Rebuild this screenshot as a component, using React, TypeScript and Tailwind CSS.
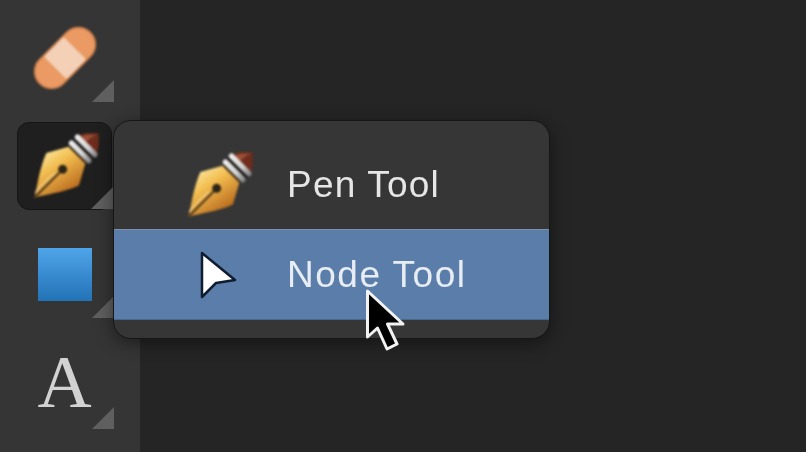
import type { ReactNode } from "react";

function PenIcon({ className = "" }: { className?: string }) {
  return (
    <svg viewBox="0 0 70 68" width={70} height={68} className={`shrink-0 blur-[0.8px] ${className}`}>
      <defs>
        <linearGradient id="nib" x1="0" y1="0" x2="1" y2="0.25">
          <stop offset="0" stopColor="#fbe8a0" />
          <stop offset="0.4" stopColor="#f2bd50" />
          <stop offset="1" stopColor="#bd6f20" />
        </linearGradient>
        <linearGradient id="ring" x1="0" y1="0" x2="1" y2="0">
          <stop offset="0" stopColor="#f2f2f2" />
          <stop offset="0.6" stopColor="#d4d4d4" />
          <stop offset="1" stopColor="#7a7a7a" />
        </linearGradient>
      </defs>
      <g transform="translate(65 2) rotate(45)">
        <path d="M-14 16 L-9 8 L0 -1 L9 8 L14 16 Z" fill="#6e2c1c" strokeLinejoin="round" />
        <path d="M-3 16 L-2 6 L0 1 L-8 9 L-11 16 Z" fill="#9a4f36" />
        <rect x="-15" y="14" width="30" height="5.5" rx="2.5" fill="url(#ring)" />
        <rect x="-14" y="19.5" width="28" height="3" fill="#1f1c1a" />
        <rect x="-15" y="22.5" width="30" height="5.5" rx="2.5" fill="url(#ring)" />
        <rect x="-12" y="28" width="24" height="2" fill="#3a2a18" />
        <path d="M-12 30 L12 30 L23 50 C17 66 7 78 0 90 C-7 78 -17 66 -23 50 Z" fill="url(#nib)" />
        <path d="M0 89 L0 54" stroke="#4a3518" strokeWidth="2" />
        <path d="M-3 86 C-4 76 -4 66 -3 58" stroke="#fff6cf" strokeWidth="1.2" fill="none" opacity="0.7" />
        <circle cx="0" cy="50" r="4.5" fill="#2c2416" />
      </g>
    </svg>
  );
}

function PlasterIcon() {
  return (
    <svg viewBox="0 0 70 66" width={70} height={66} className="shrink-0 blur-[0.8px]">
      <g transform="translate(35 33) rotate(-45)">
        <rect x="-36" y="-17" width="72" height="34" rx="17" fill="#ea9a62" stroke="#c57a4a" strokeWidth="1.5" />
        <rect x="-14" y="-16" width="28" height="32" rx="2" fill="#f3d0b6" />
      </g>
    </svg>
  );
}

function Corner() {
  return (
    <svg viewBox="0 0 22 22" width={22} height={22} className="absolute bottom-0 right-[-2px] blur-[0.6px]">
      <polygon points="22,0 22,22 0,22" fill="#5f5f5f" />
    </svg>
  );
}

function Tool({ children, active, className = "" }: { children: ReactNode; active?: boolean; className?: string }) {
  return (
    <div
      className={`relative flex h-[88px] w-[95px] shrink-0 items-center justify-center rounded-xl ${
        active ? "border border-[#161616] bg-[#1f1f1f]" : ""
      } ${className}`}
    >
      {children}
      <Corner />
    </div>
  );
}

export default function App() {
  return (
    <div className="relative flex h-screen w-screen overflow-hidden bg-[#252525] font-['Liberation_Sans',sans-serif]">
      {/* barra de ferramentas */}
      <aside className="flex h-full w-[140px] shrink-0 flex-col gap-5 bg-[#353535] pl-[17px] pt-[14px]">
        <Tool>
          <PlasterIcon />
        </Tool>
        <Tool active>
          <PenIcon className="ml-[7px]" />
        </Tool>
        <Tool>
          <div className="h-[53px] w-[54px] bg-linear-to-b from-[#4fa5e8] to-[#2272b6] blur-[0.6px]" />
        </Tool>
        <Tool className="mt-[3px]">
          <span className="mb-[8px] font-['Liberation_Serif',serif] text-[75px] leading-none text-[#d2d2d2] blur-[0.7px]">
            A
          </span>
        </Tool>
      </aside>

      {/* menu do grupo de ferramentas */}
      <div className="absolute left-[113px] top-[120px] w-[437px] overflow-hidden rounded-[18px] border border-[#161616] bg-[#363636] shadow-[0_4px_18px_rgba(0,0,0,0.45)]">
        <div className="flex h-[108px] items-center pl-[73px] pt-[19px]">
          <PenIcon />
          <span className="ml-[30px] text-[37px] leading-none tracking-[1.2px] text-[#e6e6e6] blur-[0.6px]">Pen Tool</span>
        </div>
        <div className="flex h-[91px] items-center border-y border-t-[#7c90a8] border-b-[#46678f] bg-[#5a7ea9] pl-[73px]">
          <div className="flex w-[70px] shrink-0 pl-[11px]">
            <svg viewBox="0 0 42 50" width={42} height={50} className="blur-[0.5px]">
              <path
                d="M4 3 L37 30 L18 33 L4 47 Z"
                fill="#ffffff"
                stroke="#101c30"
                strokeWidth="2.5"
                strokeLinejoin="round"
              />
            </svg>
          </div>
          <span className="ml-[30px] text-[37px] leading-none tracking-[1.5px] text-[#e8edf3] blur-[0.6px]">Node Tool</span>
        </div>
        <div className="h-[18px]" />
      </div>

      {/* ponteiro do mouse */}
      <svg viewBox="0 0 46 68" width={46} height={68} className="absolute left-[362px] top-[285px] blur-[0.5px]">
        <path
          d="M5.5 6 L5.5 52 L15.5 43 L25 64 L35 59 L25.5 39 L41 39 Z"
          fill="#000000"
          stroke="#f2f2f2"
          strokeWidth="3"
          strokeLinejoin="round"
        />
      </svg>
    </div>
  );
}
